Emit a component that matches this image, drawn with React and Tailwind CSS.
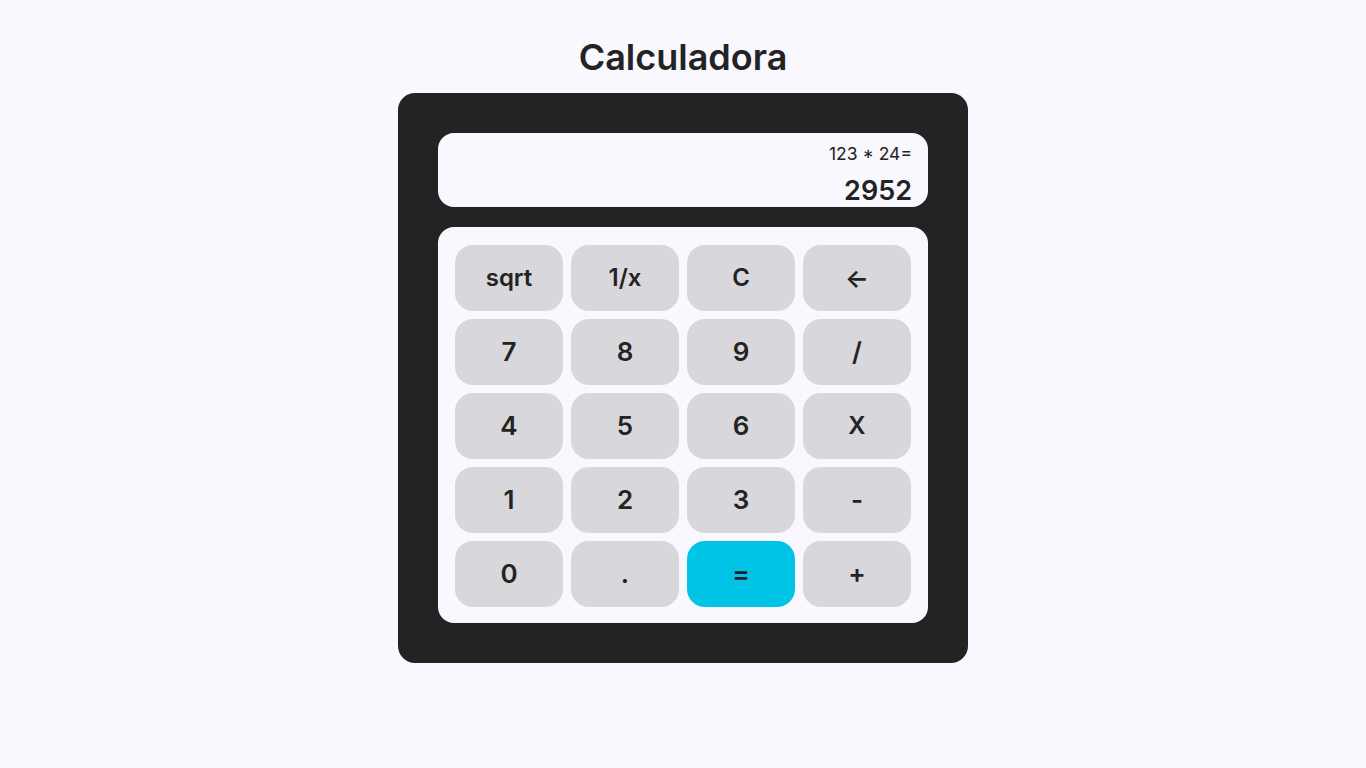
const keys = [
  { label: 'sqrt', size: 'text-[24px]' },
  { label: '1/x', size: 'text-[24px]' },
  { label: 'C', size: 'text-[24px]' },
  { label: '←', size: 'text-[25px]' },
  { label: '7' },
  { label: '8' },
  { label: '9' },
  { label: '/' },
  { label: '4' },
  { label: '5' },
  { label: '6' },
  { label: 'X', size: 'text-[24px]' },
  { label: '1' },
  { label: '2' },
  { label: '3' },
  { label: '-' },
  { label: '0' },
  { label: '.' },
  { label: '=', accent: true },
  { label: '+' },
]

function Key({ label, size = 'text-[26px]', accent }) {
  return (
    <button
      className={
        'h-[66px] rounded-[18px] flex items-center justify-center font-semibold text-[#232323] leading-none ' +
        size +
        (accent ? ' bg-[#00c4e6]' : ' bg-[#d8d7dc]')
      }
    >
      {label}
    </button>
  )
}

export default function App() {
  return (
    <div className="min-h-screen w-full bg-[#f8f8fe] flex flex-col items-center pt-[35px] font-['Inter',_sans-serif]">
      <h1 className="text-[36px] leading-[44px] font-semibold text-[#232323] mb-[14px]">Calculadora</h1>

      <div className="w-[570px] h-[570px] bg-[#232323] rounded-[17px] p-[40px] flex flex-col gap-[20px]">
        {/* display */}
        <div className="h-[74px] bg-[#f8f8fe] rounded-[16px] flex flex-col items-end pr-[16px] pt-[10px]">
          <div className="text-[17.5px] leading-[22px] text-[#232323]">123 * 24=</div>
          <div className="mt-[9px] text-[27px] leading-[34px] font-semibold text-[#232323]">2952</div>
        </div>

        {/* keypad */}
        <div className="bg-[#f8f8fe] rounded-[16px] px-[17px] pt-[18px] pb-[16px] grid grid-cols-4 gap-[8px]">
          {keys.map((k, i) => (
            <Key key={i} {...k} />
          ))}
        </div>
      </div>
    </div>
  )
}
